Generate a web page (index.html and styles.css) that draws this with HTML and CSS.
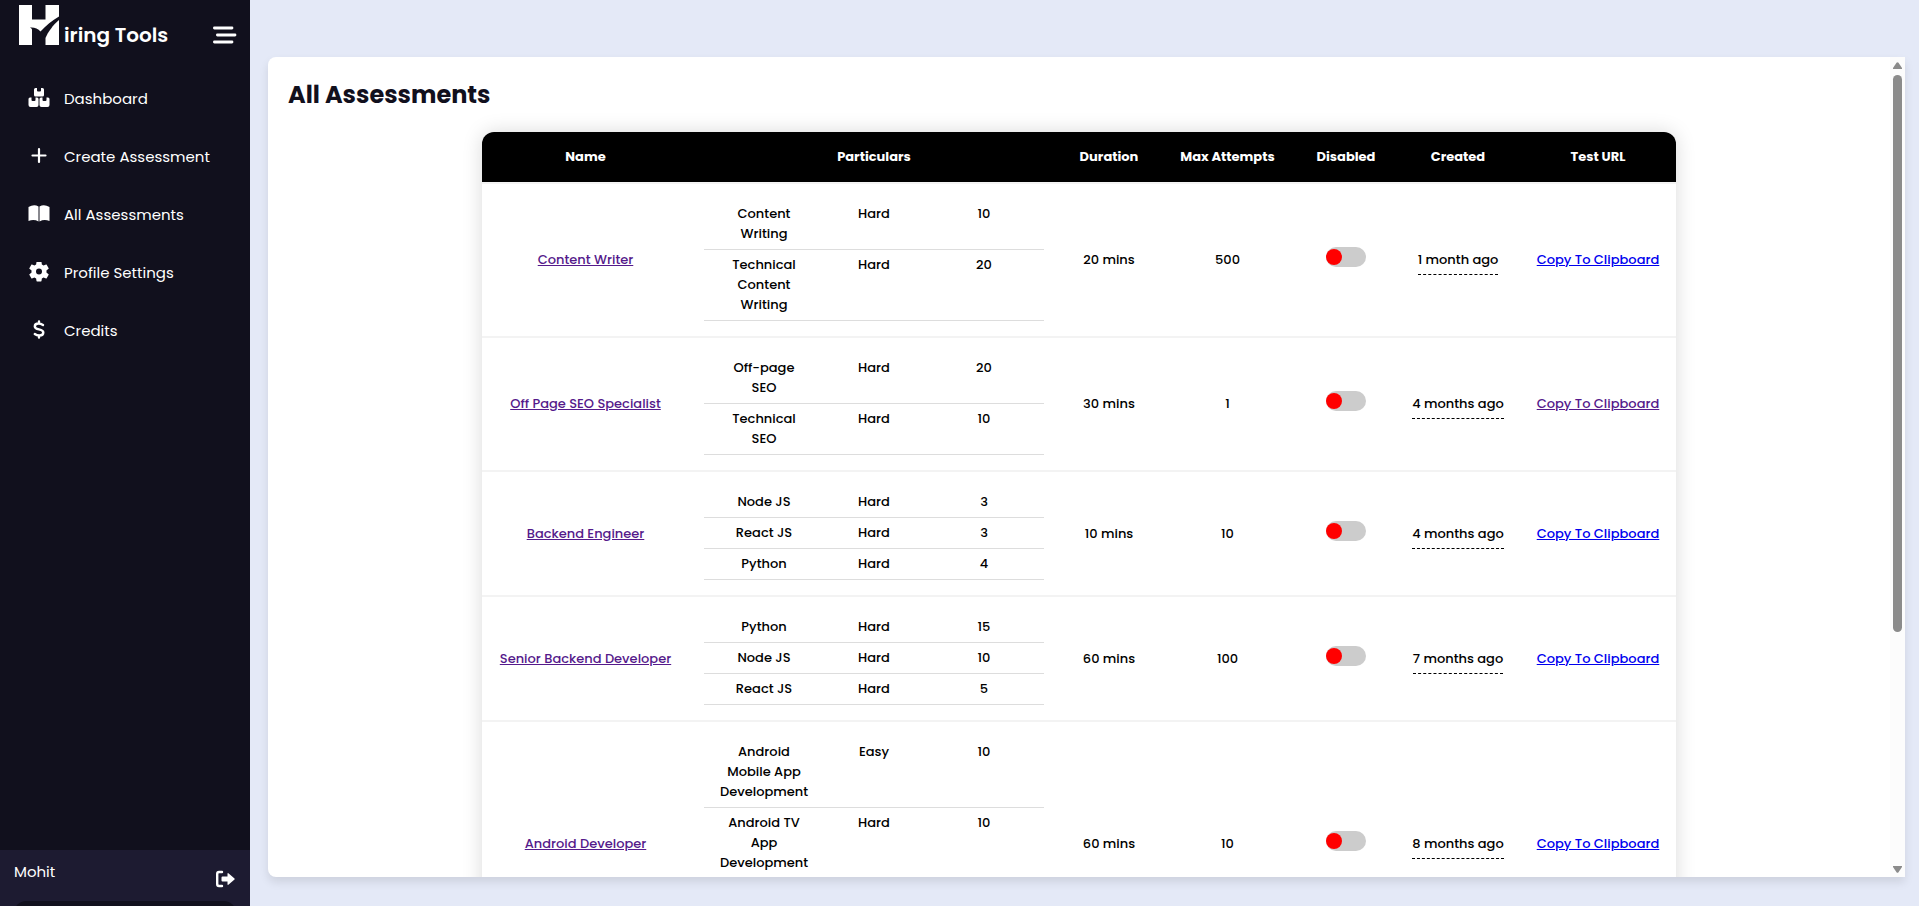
FILE: index.html
```html
<!DOCTYPE html>
<html lang="en">
  <head>
    <meta charset="UTF-8" />
    <meta name="viewport" content="width=device-width, initial-scale=1.0" />
    <title>All Assessments | Hiring Tools</title>
    <link rel="stylesheet" href="styles.css">
  </head>
  <body>
    <aside class="sidebar">
      <div class="logo-details">
        <svg class="logo" viewBox="0 0 40 40" aria-hidden="true">
          <path fill="#fff" d="M0 0h13v14.500h13.500V0H40v11.500C33 15.500 27 20.500 21.500 26.500C19 23.500 15 22 11 22.500C12 23 12.500 23.500 13 24.500V40H0z" />
          <path fill="#fff" d="M40 15V40H26.500V33C29 27 34 20 40 15z" />
        </svg>
        <span class="logo-name">iring Tools</span>
        <button class="menu-btn" aria-label="Toggle menu">
          <svg width="24" height="20" viewBox="0 0 24 20" fill="none" stroke="#fff" stroke-width="2.800" stroke-linecap="round">
            <path d="M1.400 3H19M4.400 10H22M1.400 17H19" />
          </svg>
        </button>
      </div>

      <ul class="nav-list">
        <li>
          <a href="#">
            <svg width="22" height="20" viewBox="0 0 22 20" fill="#fff">
              <path d="M7.500 0H9v2.500q0 1 1 1h2q1 0 1-1V0h1.500q1.500 0 1.500 1.500V7q0 1.500-1.500 1.500h-7Q6 8.500 6 7V1.500Q6 0 7.500 0z" />
              <path d="M2 9.500h1.500v2.500q0 1 1 1h2q1 0 1-1V9.500H9q1.500 0 1.500 1.500v6q0 2-2 2h-6q-2 0-2-2v-6q0-1.500 1.500-1.500z" />
              <path d="M13 9.500h1.500v2.500q0 1 1 1h2q1 0 1-1V9.500H20q1.500 0 1.500 1.500v6q0 2-2 2h-6q-2 0-2-2v-6q0-1.500 1.500-1.500z" />
            </svg>
            <span>Dashboard</span>
          </a>
        </li>
        <li>
          <a href="#">
            <svg width="22" height="20" viewBox="0 0 22 20" fill="none" stroke="#fff" stroke-width="2.200" stroke-linecap="round">
              <path d="M11 3v13M4.500 9.500h13" />
            </svg>
            <span>Create Assessment</span>
          </a>
        </li>
        <li>
          <a href="#">
            <svg width="22" height="20" viewBox="0 0 22 20" fill="#fff">
              <path d="M.500 3Q6 0 10.500 2.500v15Q6 15 .500 17z" />
              <path d="M11.500 2.500Q16 0 21.500 3v14Q16 15 11.500 17.500z" />
            </svg>
            <span>All Assessments</span>
          </a>
        </li>
        <li>
          <a href="#">
            <svg width="22" height="20" viewBox="1 2.500 22 20" fill="#fff">
              <path d="M19.430 12.980c.040-.320.070-.640.070-.980s-.030-.660-.070-.980l2.110-1.650c.190-.150.240-.420.120-.640l-2-3.460c-.120-.220-.390-.300-.610-.220l-2.490 1c-.520-.400-1.080-.730-1.690-.980l-.380-2.650C14.460 2.180 14.250 2 14 2h-4c-.250 0-.460.180-.490.420l-.380 2.650c-.610.250-1.170.590-1.690.980l-2.490-1c-.230-.090-.490 0-.610.220l-2 3.460c-.130.220-.070.490.120.640l2.110 1.650c-.040.320-.070.650-.070.980s.030.660.070.980l-2.110 1.650c-.190.150-.240.420-.120.640l2 3.460c.120.220.390.300.610.220l2.490-1c.520.400 1.080.730 1.690.980l.380 2.650c.030.240.240.420.490.420h4c.250 0 .460-.180.490-.420l.380-2.650c.610-.250 1.170-.590 1.690-.980l2.490 1c.230.090.490 0 .610-.220l2-3.460c.120-.220.070-.490-.120-.640l-2.110-1.650zM12 15a3 3 0 1 1 0-6 3 3 0 0 1 0 6z" />
            </svg>
            <span>Profile Settings</span>
          </a>
        </li>
        <li>
          <a href="#">
            <svg width="22" height="20" viewBox="0 0 22 20" fill="none" stroke="#fff" stroke-width="2.400" stroke-linecap="round" stroke-linejoin="round">
              <path d="M11 1.500v2M11 15.500v2M15 5C13.500 4 12 3.500 10.500 3.500C8 3.500 6.800 5 6.800 6.500C6.800 10.500 15.300 8.300 15.300 12.500C15.300 14.500 13.500 15.500 11.500 15.500C9.800 15.500 8 15 6.800 14" />
            </svg>
            <span>Credits</span>
          </a>
        </li>
      </ul>

      <div class="profile">
        <div class="profile-row">
          <span class="profile-name">Mohit</span>
          <button class="logout" aria-label="Log out">
            <svg width="20" height="18" viewBox="0 0 20 18">
              <path fill="none" stroke="#fff" stroke-width="2.400" stroke-linecap="round" d="M6 2H3Q1.200 2 1.200 4v10q0 2 1.800 2h3" />
              <path fill="#fff" d="M6.500 6.500h5V4q0-1.500 1.200-.600L18.500 8.400q.600.600 0 1.200l-5.800 5Q11.500 15.500 11.500 14v-2.500h-5q-1 0-1-1v-3q0-1 1-1z" />
            </svg>
          </button>
        </div>
        <div class="profile-bar"></div>
      </div>
    </aside>

    <main class="home-section">
      <section class="card">
        <div class="card-body">
          <h1>All Assessments</h1>
          <table class="assessments">
            <colgroup>
              <col class="col-name">
              <col class="col-particulars">
              <col class="col-duration">
              <col class="col-attempts">
              <col class="col-disabled">
              <col class="col-created">
              <col class="col-url">
            </colgroup>
            <thead>
              <tr>
                <th>Name</th>
                <th>Particulars</th>
                <th>Duration</th>
                <th>Max Attempts</th>
                <th>Disabled</th>
                <th>Created</th>
                <th>Test URL</th>
              </tr>
            </thead>
            <tbody>
              <tr>
                <td><a class="visited" href="#">Content Writer</a></td>
                <td>
                  <ul class="particulars">
                    <li><span>Content<br>Writing</span><span>Hard</span><span>10</span></li>
                    <li><span>Technical<br>Content<br>Writing</span><span>Hard</span><span>20</span></li>
                  </ul>
                </td>
                <td>20 mins</td>
                <td>500</td>
                <td><input type="checkbox" class="switch" aria-label="Disable Content Writer"></td>
                <td><span class="created">1 month ago</span></td>
                <td><a href="#">Copy To Clipboard</a></td>
              </tr>
              <tr>
                <td><a class="visited" href="#">Off Page SEO Specialist</a></td>
                <td>
                  <ul class="particulars">
                    <li><span>Off-page<br>SEO</span><span>Hard</span><span>20</span></li>
                    <li><span>Technical<br>SEO</span><span>Hard</span><span>10</span></li>
                  </ul>
                </td>
                <td>30 mins</td>
                <td>1</td>
                <td><input type="checkbox" class="switch" aria-label="Disable Off Page SEO Specialist"></td>
                <td><span class="created">4 months ago</span></td>
                <td><a class="visited" href="#">Copy To Clipboard</a></td>
              </tr>
              <tr>
                <td><a class="visited" href="#">Backend Engineer</a></td>
                <td>
                  <ul class="particulars">
                    <li><span>Node JS</span><span>Hard</span><span>3</span></li>
                    <li><span>React JS</span><span>Hard</span><span>3</span></li>
                    <li><span>Python</span><span>Hard</span><span>4</span></li>
                  </ul>
                </td>
                <td>10 mins</td>
                <td>10</td>
                <td><input type="checkbox" class="switch" aria-label="Disable Backend Engineer"></td>
                <td><span class="created">4 months ago</span></td>
                <td><a href="#">Copy To Clipboard</a></td>
              </tr>
              <tr>
                <td><a class="visited" href="#">Senior Backend Developer</a></td>
                <td>
                  <ul class="particulars">
                    <li><span>Python</span><span>Hard</span><span>15</span></li>
                    <li><span>Node JS</span><span>Hard</span><span>10</span></li>
                    <li><span>React JS</span><span>Hard</span><span>5</span></li>
                  </ul>
                </td>
                <td>60 mins</td>
                <td>100</td>
                <td><input type="checkbox" class="switch" aria-label="Disable Senior Backend Developer"></td>
                <td><span class="created">7 months ago</span></td>
                <td><a href="#">Copy To Clipboard</a></td>
              </tr>
              <tr>
                <td><a class="visited" href="#">Android Developer</a></td>
                <td>
                  <ul class="particulars particulars-long">
                    <li><span>Android<br>Mobile App<br>Development</span><span>Easy</span><span>10</span></li>
                    <li><span>Android TV<br>App<br>Development</span><span>Hard</span><span>10</span></li>
                  </ul>
                </td>
                <td>60 mins</td>
                <td>10</td>
                <td><input type="checkbox" class="switch" aria-label="Disable Android Developer"></td>
                <td><span class="created">8 months ago</span></td>
                <td><a href="#">Copy To Clipboard</a></td>
              </tr>
            </tbody>
          </table>
        </div>
        <div class="scrollbar" aria-hidden="true">
          <svg width="9" height="7" viewBox="0 0 9 7"><path fill="#8b8b8b" d="M3.500.800q1-1.200 2 0L9 6v1H0V6z" /></svg>
          <div class="scroll-track"><div class="scroll-thumb"></div></div>
          <svg width="9" height="7" viewBox="0 0 9 7"><path fill="#8b8b8b" d="M3.500 6.200q1 1.200 2 0L9 1V0H0v1z" /></svg>
        </div>
      </section>
    </main>
  </body>
</html>
```

FILE: styles.css
```css
* {
  margin: 0;
  padding: 0;
  box-sizing: border-box;
  font-family: "Poppins", "Inter", sans-serif;
}

body {
  display: flex;
  height: 100vh;
  overflow: hidden;
  background: #e4e9f7;
}

button {
  background: none;
  border: none;
  cursor: pointer;
}

svg {
  display: block;
}

/* sidebar */
.sidebar {
  display: flex;
  flex-direction: column;
  flex: 0 0 250px;
  height: 100%;
  background: #11101d;
  color: #fff;
}

.logo-details {
  display: flex;
  align-items: flex-start;
  height: 73px;
  padding: 5px 13px 0 19px;
}

.logo {
  width: 40px;
  height: 40px;
}

.logo-name {
  flex: 1;
  margin: 15px 0 0 5px;
  font-size: 20px;
  line-height: 30px;
  font-weight: 600;
}

.menu-btn {
  margin-top: 20px;
}

.nav-list {
  flex: 1;
  list-style: none;
  padding: 0 14px;
}

.nav-list li {
  margin-bottom: 8px;
}

.nav-list a {
  display: flex;
  align-items: center;
  height: 50px;
  color: #fff;
  text-decoration: none;
  font-size: 15px;
}

.nav-list svg {
  margin: 0 14px;
}

.profile {
  height: 56px;
  overflow: hidden;
  padding: 11px 14px 0;
  background: #1d1b31;
}

.profile-row {
  display: flex;
  justify-content: space-between;
  height: 40px;
}

.profile-name {
  font-size: 15px;
  line-height: 22px;
}

.logout {
  align-self: center;
  margin-bottom: 4px;
}

.profile-bar {
  height: 40px;
  border-radius: 12px;
  background: #11101d;
}

/* content */
.home-section {
  flex: 1;
  min-width: 0;
  padding: 57px 14px 29px 18px;
}

.card {
  display: flex;
  height: 100%;
  background: #fff;
  border-radius: 8px 0 0 8px;
  box-shadow: 0 5px 10px rgba(0, 0, 0, 0.1);
}

.card-body {
  flex: 1;
  min-width: 0;
  padding: 20px 20px 0;
  overflow: auto;
  scrollbar-width: none;
}

h1 {
  margin-bottom: 19px;
  font-size: 24px;
  line-height: 36px;
  font-weight: 700;
  color: #11101d;
}

.assessments {
  table-layout: fixed;
  width: 1194px;
  margin: 0 auto;
  border-spacing: 0;
  border-radius: 12px 12px 0 0;
  overflow: hidden;
  box-shadow: 0 0 20px rgba(0, 0, 0, 0.15);
  font-size: 13px;
  line-height: 20px;
  text-align: center;
  white-space: nowrap;
}

.col-name { width: 207px; }
.col-particulars { width: 370px; }
.col-duration { width: 100px; }
.col-attempts { width: 137px; }
.col-disabled { width: 100px; }
.col-created { width: 124px; }
.col-url { width: 156px; }

th {
  padding: 15px 0;
  background: #000;
  background-clip: padding-box;
  color: #fff;
  font-weight: 700;
  border-bottom: 2px solid #f3f3f3;
}

td {
  padding: 15px 0;
  border-bottom: 2px solid #f3f3f3;
  font-weight: 500;
  vertical-align: middle;
}

a {
  color: #0000ee;
}

a.visited {
  color: #551a8b;
}

.particulars {
  list-style: none;
  margin: 0 15px;
}

.particulars-long {
  min-height: 213px;
}

.particulars li {
  display: grid;
  grid-template-columns: repeat(3, 90px);
  justify-content: space-between;
  padding: 5px 15px;
  border-bottom: 1px solid #ddd;
}

.switch {
  appearance: none;
  display: inline-block;
  width: 40px;
  height: 20px;
  padding: 2px 0;
  border-radius: 10px;
  background: #ccc;
  vertical-align: middle;
  margin-bottom: 6px;
  cursor: pointer;
}

.switch::before {
  content: "";
  display: block;
  width: 16px;
  height: 16px;
  border-radius: 50%;
  background: #f00;
}

.switch:checked::before {
  margin-left: 24px;
  background: #0a0;
}

.created {
  padding-bottom: 5px;
  border-bottom: 1px dashed #000;
}

/* scrollbar */
.scrollbar {
  display: flex;
  flex-direction: column;
  align-items: center;
  gap: 6px;
  width: 15px;
  padding: 5px 0 4px;
  background: #fcfcfc;
}

.scroll-track {
  flex: 1;
  width: 9px;
}

.scroll-thumb {
  height: 71%;
  border-radius: 5px;
  background: #8b8b8b;
}
```
